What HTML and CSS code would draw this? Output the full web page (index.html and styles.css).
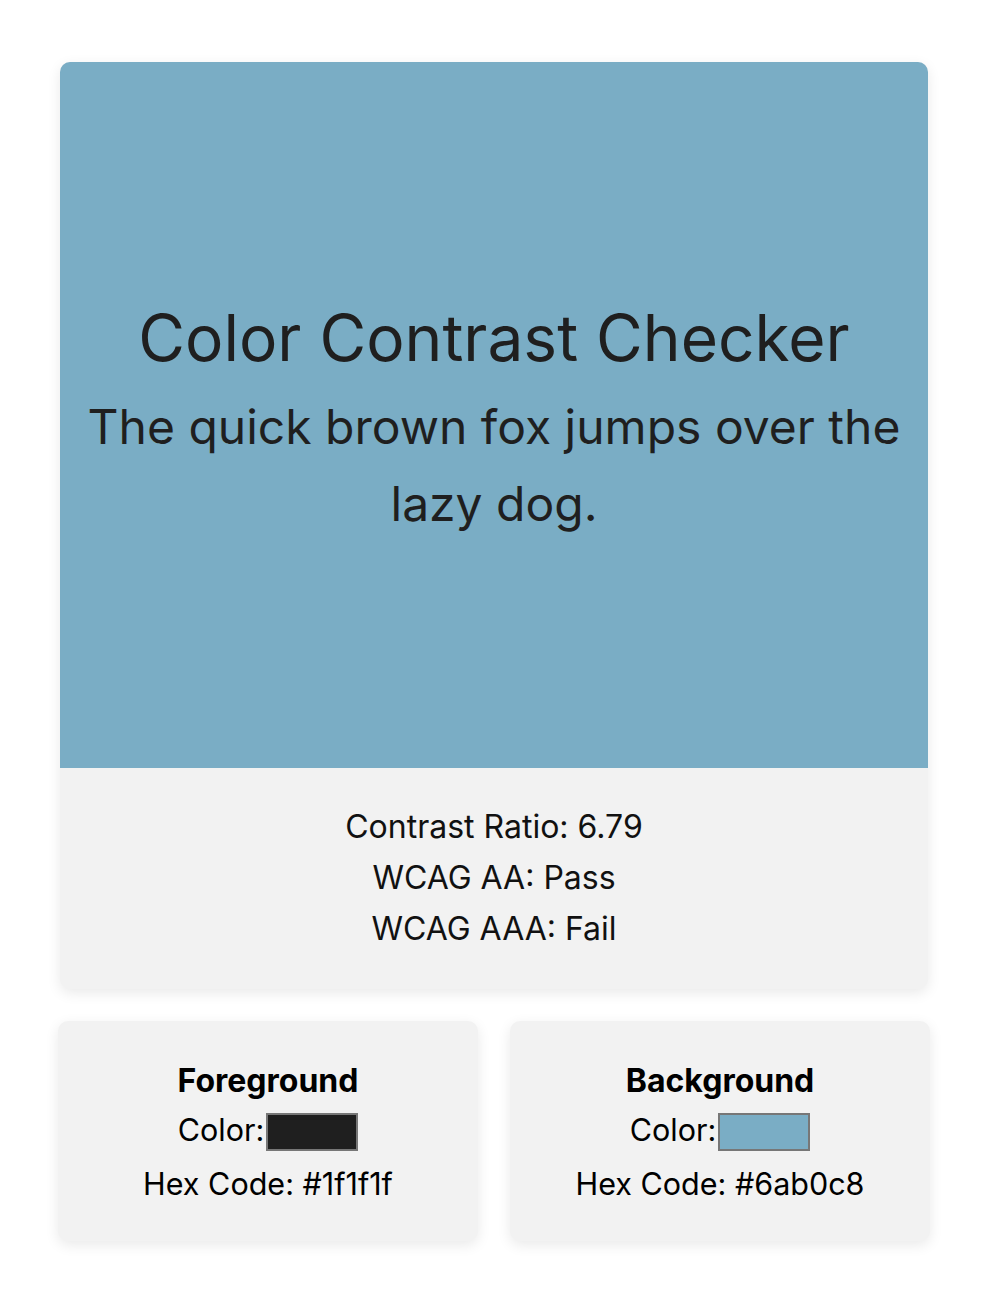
FILE: index.html
```html
<!DOCTYPE html>
<html lang="en">
<head>
<meta charset="utf-8">
<title>Color Contrast Checker</title>
<link rel="stylesheet" href="styles.css">
</head>
<body>
<div class="page">
  <section class="checker">
    <div class="preview">
      <h1 class="preview-title">Color Contrast Checker</h1>
      <p class="preview-text">The quick brown fox jumps over the lazy dog.</p>
    </div>
    <div class="results">
      <p class="result-line">Contrast Ratio: 6.79</p>
      <p class="result-line">WCAG AA: Pass</p>
      <p class="result-line">WCAG AAA: Fail</p>
    </div>
  </section>
  <div class="pickers">
    <div class="picker">
      <h3 class="picker-title">Foreground</h3>
      <p class="picker-line">Color:<span class="swatch swatch-fg"></span></p>
      <p class="picker-line picker-hex">Hex Code: #1f1f1f</p>
    </div>
    <div class="picker">
      <h3 class="picker-title">Background</h3>
      <p class="picker-line">Color:<span class="swatch swatch-bg"></span></p>
      <p class="picker-line picker-hex">Hex Code: #6ab0c8</p>
    </div>
  </div>
</div>
</body>
</html>
```

FILE: styles.css
```css
* { box-sizing: border-box; }

html, body {
  margin: 0;
  padding: 0;
  background: #ffffff;
}

body {
  font-family: Inter, "Noto Sans", "Liberation Sans", sans-serif;
  color: #000;
  line-height: 1.6;
}

.page {
  width: 872px;
  margin: 62px 0 0 58px;
  padding-bottom: 40px;
}

.checker {
  margin: 0 2px;
  border-radius: 10px;
  overflow: hidden;
  background: #f2f2f2;
  box-shadow: 0 4px 14px rgba(0, 0, 0, 0.09);
}

.preview {
  height: 706px;
  background: #7aadc5;
  color: #1f1f1f;
  display: flex;
  flex-direction: column;
  align-items: center;
  justify-content: center;
  padding: 0 24px;
  text-align: center;
}

.preview-title {
  margin: 0;
  font-size: 64px;
  font-weight: 400;
  line-height: 1.6;
}

.preview-text {
  margin: 0;
  font-size: 48px;
  line-height: 1.6;
}

.results {
  padding: 33px 24px 34px;
  text-align: center;
  color: #111;
}

.result-line {
  margin: 0;
  font-size: 32px;
  line-height: 1.6;
}

.pickers {
  margin-top: 32px;
  display: grid;
  grid-template-columns: 1fr 1fr;
  gap: 32px;
}

.picker {
  background: #f2f2f2;
  border-radius: 10px;
  box-shadow: 0 4px 14px rgba(0, 0, 0, 0.09);
  padding: 34px 16px 33px;
  text-align: center;
}

.picker-title {
  margin: 0;
  font-size: 32px;
  font-weight: 700;
  line-height: 1.6;
}

.picker-line {
  margin: 0;
  font-size: 30.5px;
  line-height: 1.6;
}

.picker-hex {
  margin-top: 5px;
}

.swatch {
  display: inline-block;
  width: 92px;
  height: 38px;
  border: 2px solid #777;
  vertical-align: middle;
  margin-left: 2px;
}

.swatch-fg { background: #1f1f1f; }
.swatch-bg { background: #7aadc5; }
```
